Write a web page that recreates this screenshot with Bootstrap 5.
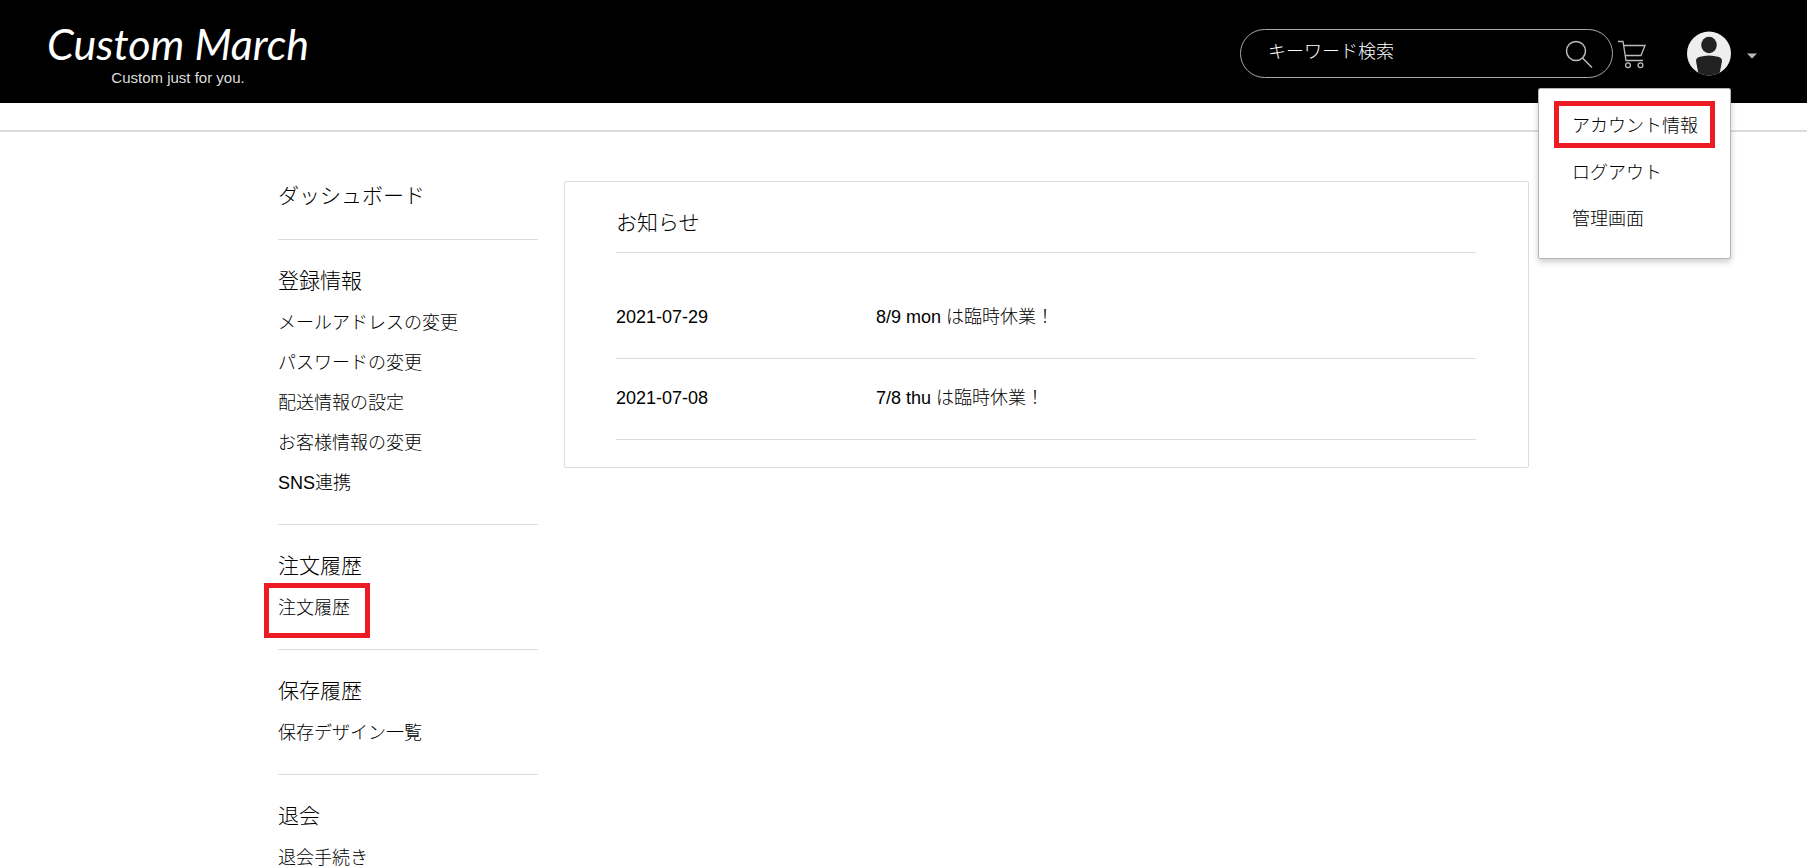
<!DOCTYPE html>
<html lang="ja">
<head>
<meta charset="utf-8">
<meta name="viewport" content="width=device-width, initial-scale=1">
<title>Custom March</title>
<link href="https://cdn.jsdelivr.net/npm/bootstrap@5.3.0/dist/css/bootstrap.min.css" rel="stylesheet">
<style>
  :root { --rule: #dcdcdc; --accent: #ed1c24; }
  body { font-family: "Liberation Sans", "Noto Sans CJK JP", sans-serif; font-size: 18px; font-weight: 300; line-height: 28px; color: #000; background: #fff; }
  a { color: inherit; text-decoration: none; }

  .site-header { background: #000; height: 103px; padding: 0 50px 0 47px; }
  .brand { color: #fff; text-align: center; }
  .brand-name { font-family: Lato, sans-serif; font-style: italic; font-weight: 400; font-size: 43px; line-height: 52px; white-space: nowrap; }
  .brand-tag { font-size: 15px; line-height: 16px; color: #ddd; }

  .header-tools { padding-top: 4px; }
  .search { width: 373px; height: 49px; border: 1px solid #aaa; border-radius: 25px; padding: 0 19px 0 27px; }
  .search input { background: none; border: 0; outline: 0; color: #fff; font-weight: 300; min-width: 0; padding: 0 0 4px; }
  .search input::placeholder { color: #fff; opacity: 1; }
  .search button, .account-toggle { background: none; border: 0; padding: 0; }
  .cart { margin: 0 40px 0 4px; }
  .account-menu.dropdown-menu { top: 57px; right: 26px; width: 193px; padding: 12px 15px 18px; border: 1px solid #b5b5b5; border-radius: 2px; box-shadow: 0 3px 6px rgba(0,0,0,.2); font-size: 18px; color: #000; }
  .account-menu a { height: 46px; padding: 3px 18px 0; white-space: nowrap; }
  .account-menu a.marked { height: 47px; border: 5px solid var(--accent); padding: 3px 13px 0; }

  .page-body { border-top: 2px solid var(--rule); margin-top: 27px; padding-top: 49px; }
  .page-width { max-width: 1251px; gap: 26px; }
  .side { width: 260px; }
  .side h2, .notice h1 { font-size: 21px; font-weight: 300; margin: 0; }
  .side h2 { line-height: 34px; }
  .side section { border-top: 1px solid var(--rule); padding: 24px 0 21px; }
  .side section:first-child { border: 0; padding: 0 0 28px; }
  .side section:first-child h2 { line-height: 30px; }
  .side ul { margin-top: 5px; }
  .side li { line-height: 40px; }
  .side .marked { display: inline-block; position: relative; }
  .side .marked::after { content: ""; position: absolute; inset: -5px -20px -10px -14px; border: 5px solid var(--accent); pointer-events: none; }

  .notice { border: 1px solid var(--rule); border-radius: 2px; padding: 25px 52px 27px 51px; }
  .notice h1 { line-height: 32px; padding-bottom: 13px; border-bottom: 1px solid var(--rule); }
  .notice table { margin-top: 25px; }
  .notice td { padding: 25px 0 27px; border-bottom: 1px solid var(--rule); }
  .notice td:first-child { width: 260px; }
</style>
</head>
<body>
<header class="site-header d-flex align-items-center justify-content-between">
  <a href="#" class="brand">
    <div class="brand-name">Custom March</div>
    <div class="brand-tag">Custom just for you.</div>
  </a>
  <div class="header-tools d-flex align-items-center">
    <form class="search d-flex align-items-center" role="search">
      <input type="search" class="flex-grow-1" placeholder="キーワード検索" aria-label="キーワード検索">
      <button type="button" aria-label="検索">
        <svg class="d-block" width="28" height="28" viewBox="0 0 28 28" fill="none" stroke="#bbb" stroke-width="1.5"><circle cx="11" cy="11" r="9.5"/><path d="M17.5 18 27 27.5"/></svg>
      </button>
    </form>
    <a href="#" class="cart" aria-label="カート">
      <svg class="d-block" width="30" height="30" viewBox="0 0 30 30" fill="none" stroke="#bbb" stroke-width="1.3"><path d="M1 2.500H6L9 21.500H26M6.500 6.500H28L24 16.500H8"/><circle cx="11" cy="26.300" r="2.400"/><circle cx="23.500" cy="26.300" r="2.400"/></svg>
    </a>
    <div class="position-relative">
      <button type="button" class="account-toggle d-flex align-items-center" aria-label="アカウント" aria-expanded="true">
        <svg width="44" height="45" viewBox="0 0 44 45"><defs><clipPath id="face"><circle cx="22" cy="22.500" r="22"/></clipPath></defs><circle cx="22" cy="22.500" r="22" fill="#eee"/><g clip-path="url(#face)" fill="#222"><ellipse cx="22" cy="14" rx="7.800" ry="8.300"/><path d="M9 30Q9 27 12 26Q22 23 32 26Q35 27 35 30L32 46H12Z"/></g></svg>
        <svg class="ms-3 mt-1" width="10" height="6" viewBox="0 0 10 6"><path d="M0 .5H10L5 5.500Z" fill="#bbb"/></svg>
      </button>
      <div class="account-menu dropdown-menu show">
        <a href="#" class="marked d-flex align-items-center">アカウント情報</a>
        <a href="#" class="d-flex align-items-center">ログアウト</a>
        <a href="#" class="d-flex align-items-center">管理画面</a>
      </div>
    </div>
  </div>
</header>
<div class="page-body">
  <div class="page-width mx-auto d-flex align-items-start">
    <nav class="side flex-shrink-0" aria-label="マイページ">
      <section><h2><a href="#">ダッシュボード</a></h2></section>
      <section>
        <h2>登録情報</h2>
        <ul class="list-unstyled mb-0">
          <li><a href="#">メールアドレスの変更</a></li>
          <li><a href="#">パスワードの変更</a></li>
          <li><a href="#">配送情報の設定</a></li>
          <li><a href="#">お客様情報の変更</a></li>
          <li><a href="#">SNS連携</a></li>
        </ul>
      </section>
      <section>
        <h2>注文履歴</h2>
        <ul class="list-unstyled mb-0"><li><a href="#" class="marked">注文履歴</a></li></ul>
      </section>
      <section>
        <h2>保存履歴</h2>
        <ul class="list-unstyled mb-0"><li><a href="#">保存デザイン一覧</a></li></ul>
      </section>
      <section>
        <h2>退会</h2>
        <ul class="list-unstyled mb-0"><li><a href="#">退会手続き</a></li></ul>
      </section>
    </nav>
    <main class="notice flex-grow-1">
      <h1>お知らせ</h1>
      <table class="w-100">
        <tbody>
          <tr><td>2021-07-29</td><td>8/9 mon は臨時休業！</td></tr>
          <tr><td>2021-07-08</td><td>7/8 thu は臨時休業！</td></tr>
        </tbody>
      </table>
    </main>
  </div>
</div>
<script src="https://cdn.jsdelivr.net/npm/bootstrap@5.3.0/dist/js/bootstrap.bundle.min.js"></script>
</body>
</html>
